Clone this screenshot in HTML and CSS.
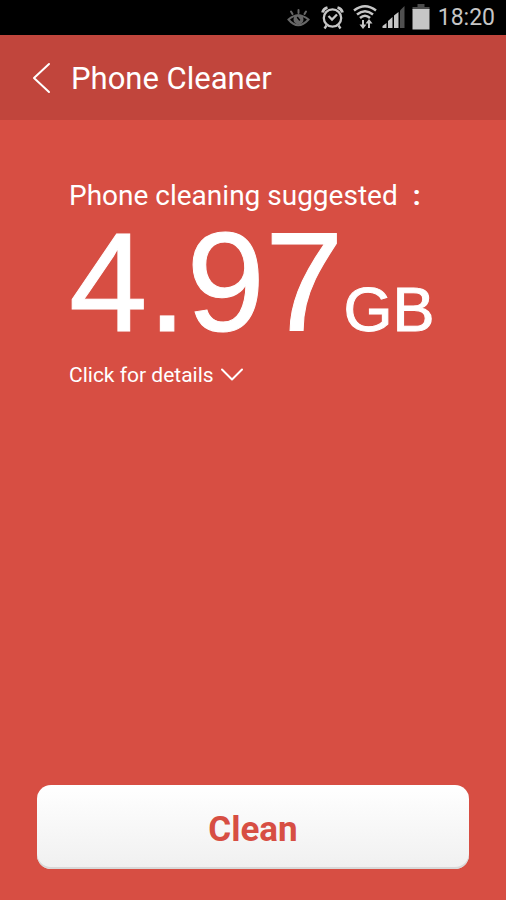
FILE: index.html
```html
<!DOCTYPE html>
<html lang="en">
<head>
<meta charset="utf-8">
<meta name="viewport" content="width=device-width, initial-scale=1">
<title>Phone Cleaner</title>
<link rel="stylesheet" href="styles.css">
</head>
<body>
<div class="status-bar">
  <svg class="status-icons" width="144" height="35" viewBox="287 0 144 35" fill="none" aria-hidden="true">
    <g stroke="#666" stroke-width="2" stroke-linecap="round">
      <path d="M288.500 19.500Q298 11 308.500 19.500Q298 31 288.500 19.500Z"/>
      <circle cx="298.500" cy="19.500" r="4" fill="#666"/>
      <path d="M298.500 10v3M291 11.500l1.500 2.500M306 11.500l-1.500 2.500"/>
      <path d="M297.500 17.500l2 2.500" stroke="#000" stroke-width="1.500"/>
    </g>
    <g stroke="#c6c6c6" stroke-width="2.300">
      <circle cx="332.500" cy="18" r="8.700"/>
      <path d="M328.500 16l3.500 3.500 5-5M326.500 25.500l-2 3M338.500 25.500l2 3"/>
      <path d="M322.500 12.500q1-4 5-5M342.500 12.500q-1-4-5-5" stroke-width="2.800"/>
    </g>
    <g stroke="#c6c6c6" stroke-width="2.500">
      <path d="M354 10.500Q365 2 376 10.500M357 14.500Q365 8 373 14.500M360 18Q365 13.500 370 18"/>
      <path d="M363 20v6M369 22v6" stroke-width="2"/>
      <path d="M359.500 24.500h7l-3.500 4.500zM365.500 23.500h7l-3.500-4.500z" fill="#c6c6c6" stroke="none"/>
    </g>
    <path d="M382.500 28v-2l4-3v5zM388 28v-7l4.500-4v11zM394 28V15.500l4.500-3.500v16z" fill="#c6c6c6"/>
    <path d="M400 28V10.500L404.500 6v22z" fill="#505050"/>
    <path d="M417.500 4h7v3h5v3h-17V7h5z" fill="#4c4c4c"/>
    <path d="M412.500 9h17v20.500h-17z" fill="#c6c6c6"/>
  </svg>
  <time class="clock">18:20</time>
</div>
<header class="title-bar">
  <button class="back" type="button" aria-label="Back">
    <svg width="20" height="32" viewBox="0 0 20 32" fill="none" stroke="#fff" stroke-width="2" stroke-linecap="round" stroke-linejoin="round" aria-hidden="true"><path d="M17 2L2 16l15 14"/></svg>
  </button>
  <h1 class="title">Phone Cleaner</h1>
</header>
<main class="content">
  <p class="lead">Phone cleaning suggested<span class="colon">:</span></p>
  <p class="amount">4.97<span class="unit">GB</span></p>
  <button class="details" type="button">Click for details
    <svg width="22" height="14" viewBox="0 0 22 14" fill="none" stroke="#fff" stroke-width="2" stroke-linecap="round" stroke-linejoin="round" aria-hidden="true"><path d="M1 1.500l10 10 10-10"/></svg>
  </button>
</main>
<footer class="actions">
  <button class="clean" type="button">Clean</button>
</footer>
</body>
</html>
```
FILE: styles.css
```css
* { box-sizing: border-box; }

body {
  margin: 0;
  min-height: 100vh;
  display: flex;
  flex-direction: column;
  background: #d74e43;
  color: #fff;
  font-family: Roboto, sans-serif;
}

h1, p { margin: 0; font-weight: 400; }

button {
  padding: 0;
  border: 0;
  background: none;
  color: inherit;
  font: inherit;
  cursor: pointer;
}

svg { display: block; }

.status-bar {
  display: flex;
  justify-content: flex-end;
  align-items: center;
  gap: 7px;
  height: 35px;
  padding-right: 11px;
  background: #000;
}

.clock {
  color: #c6c6c6;
  font-size: 23px;
  line-height: 35px;
}

.title-bar {
  display: flex;
  align-items: center;
  gap: 19px;
  height: 85px;
  padding: 0 32px;
  background: #c1453c;
}

.title {
  padding-top: 2px;
  font-size: 31px;
  line-height: 40px;
}

.content {
  flex: 1;
  padding: 56px 69px 24px;
}

.lead {
  font-size: 28px;
  line-height: 40px;
}

.colon {
  margin-left: 15px;
  font-weight: 700;
}

.amount {
  font-family: "Liberation Sans", Arial, sans-serif;
  font-size: 141px;
  line-height: 133px;
  white-space: nowrap;
  -webkit-text-stroke: 1px #fff;
}

.unit {
  font-size: 63px;
  line-height: 1;
}

.details {
  display: flex;
  align-items: center;
  gap: 7px;
  margin-top: 9px;
  font-size: 21px;
  line-height: 34px;
}

.actions { padding: 0 37px 31px; }

.clean {
  display: block;
  width: 100%;
  height: 84px;
  padding-top: 4px;
  border-radius: 14px;
  background: linear-gradient(#fff, #f0f0f0);
  box-shadow: inset 0 -2px 0 #d8d8d8;
  color: #d74e43;
  font-size: 35px;
  font-weight: 700;
}
```
